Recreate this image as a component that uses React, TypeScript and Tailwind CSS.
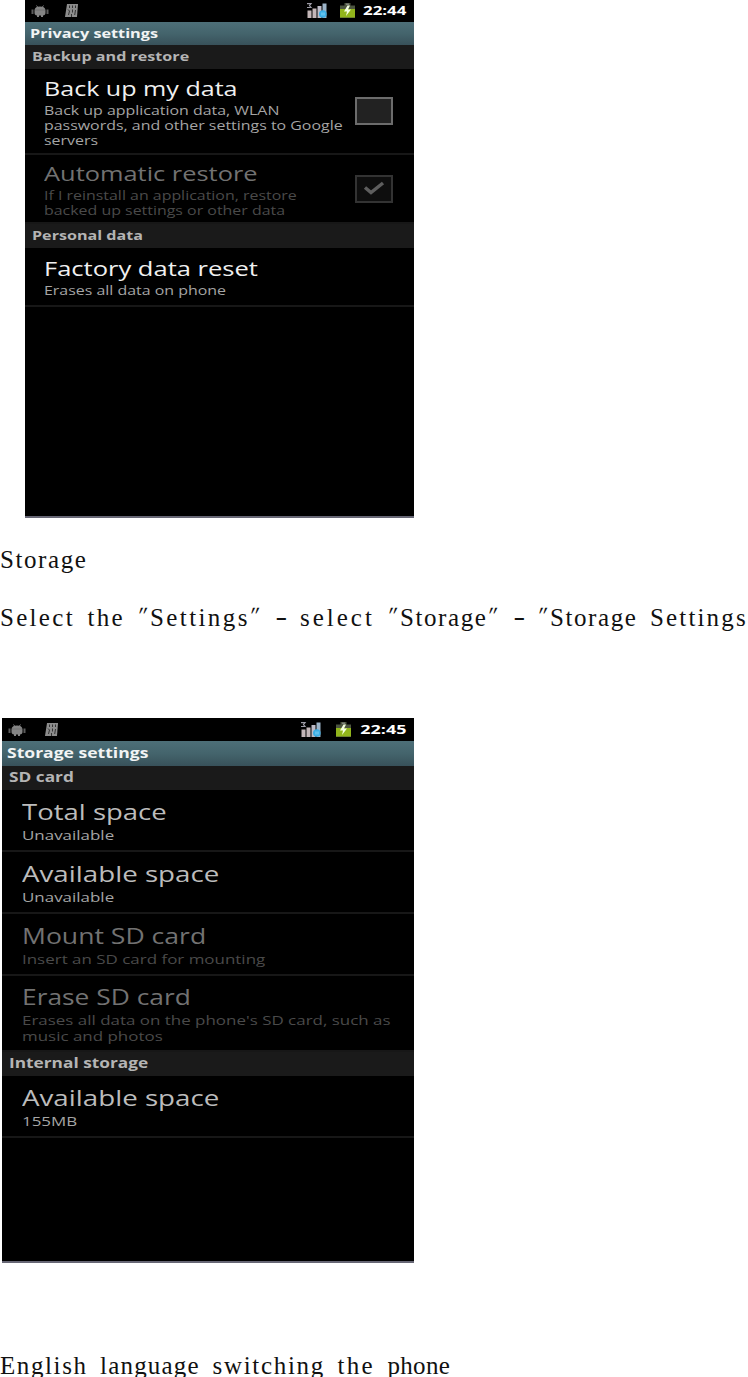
import { clsx } from 'clsx';
import type { ReactNode } from 'react';

type Item = {
  title: string;
  stretch: string;
  summary: string[];
  height: string;
  disabled?: boolean;
  checkbox?: 'on' | 'off';
};

function DebugIcon() {
  return (
    <svg className="h-3 w-[18px]" viewBox="0 0 18 12" fill="none">
      <path d="M5.500.5l1.500 2M12.500.5l-1.500 2" stroke="#777" />
      <path d="M3.500 5C3.800 2.500 6 1.500 9 1.500s5.200 1 5.500 3.500v3c0 1.500-1 2.500-2.500 2.500V12h-2v-1.500H8V12H6v-1.500C4.500 10.500 3.500 9.500 3.500 8z" fill="#858585" />
      <path d="M1.500 4.500v4.500M16.500 4.500v4.500" stroke="#5c5c5c" strokeWidth="2" />
      <path d="M4 5h10" stroke="#666" strokeWidth=".6" />
    </svg>
  );
}

function CardIcon() {
  return (
    <svg className="h-[13px] w-[13px]" viewBox="0 0 13 13" fill="none">
      <path d="M2 0h11l-1 13H0z" fill="#8c8c8c" />
      <path d="M4.500 1.500v2.500M7.500 1.500v2.500M10.500 1.500v2.500M3 5.500l1.500 1.500-1 4M7.500 5.500v3M10.500 6l-.8 5M6.500 10v3" stroke="#333" />
    </svg>
  );
}

function SignalIcon() {
  return (
    <svg className="h-[15px] w-5" viewBox="0 0 20 15" fill="none">
      <path d="M0 .7h4L2.500 2.500 4 4.500H0" stroke="#9d9ba5" strokeWidth="1.200" />
      <path d="M.5 7.500h4V15h-4zM5.500 5.500h4V15h-4z" fill="#c3b6b8" />
      <path d="M10.500 3h4v12h-4z" fill="#bdbbc6" />
      <path d="M15.500.5h4V15h-4z" fill="#9db4c8" />
      <circle cx="15.800" cy="11" r="3.800" fill="#3baee5" />
      <path d="M15 9.500v3M17 9.500v3" stroke="#9bddfa" strokeWidth=".8" />
    </svg>
  );
}

function BatteryIcon() {
  return (
    <svg className="h-[15px] w-[15px]" viewBox="0 0 15 15" fill="none">
      <path d="M4.500 0h6v2.500H15V15H0V2.500h4.500z" fill="#4c5540" />
      <path d="M0 6h15v8.500H0z" fill="#91b51b" />
      <path d="M6 1.200h3" stroke="#999" />
      <path d="M7.500 2.500L4 8.500h3L6 13l5-6.500H8l2-4z" fill="#f4ffe0" />
    </svg>
  );
}

function StatusBar({ time, large }: { time: string; large?: boolean }) {
  return (
    <div
      className={clsx(
        'flex shrink-0 items-center bg-black pl-[6px] pr-2 text-white',
        large ? 'h-[23px]' : 'h-[22px] pb-px',
      )}
    >
      <DebugIcon />
      <span className={large ? 'ml-[19px]' : 'ml-[16px]'}>
        <CardIcon />
      </span>
      <span className="ml-auto">
        <SignalIcon />
      </span>
      <span className={large ? 'ml-[15px]' : 'ml-[13px]'}>
        <BatteryIcon />
      </span>
      <span className={clsx('flex justify-end', large ? 'w-[55px]' : 'w-[51px]')}>
        <span
          className={clsx(
            'origin-right text-[13px] font-bold leading-none',
            large ? 'scale-x-[1.38]' : 'scale-x-[1.3]',
          )}
        >
          {time}
        </span>
      </span>
    </div>
  );
}

function TitleBar({ children, large }: { children: ReactNode; large?: boolean }) {
  return (
    <div
      className={clsx(
        'flex shrink-0 items-center bg-linear-to-b from-[#4d6f78] via-[#44646c] to-[#38515a] pl-[5px]',
        large ? 'h-[25px]' : 'h-[23px]',
      )}
    >
      <span
        className={clsx(
          'origin-left whitespace-nowrap font-bold leading-none text-[#f2f4f4]',
          large ? 'scale-x-[1.31] text-[13.4px]' : 'scale-x-[1.28] text-[12.7px]',
        )}
      >
        {children}
      </span>
    </div>
  );
}

function Category({ children, large }: { children: ReactNode; large?: boolean }) {
  return (
    <div className={clsx('flex h-6 shrink-0 items-center bg-[#1a1a1a] pl-[7px]', !large && 'pb-px')}>
      <span
        className={clsx(
          'origin-left whitespace-nowrap font-bold leading-none text-[#b4b4b4]',
          large ? 'scale-x-[1.29] text-[13.4px]' : 'scale-x-[1.27] text-[12.7px]',
        )}
      >
        {children}
      </span>
    </div>
  );
}

function Checkbox({ checked }: { checked: boolean }) {
  return (
    <span
      className={clsx(
        'ml-auto mr-[21px] flex h-7 w-[38px] items-center justify-center border-2',
        checked ? 'border-[#333] bg-[#0e0e0e]' : 'border-[#6c6c6c] bg-[#222]',
      )}
    >
      {checked && (
        <svg className="h-4 w-6" viewBox="0 0 24 16" fill="none">
          <path d="M3 6.500l6 5L21 2" stroke="#5e5e5e" strokeWidth="3.500" />
        </svg>
      )}
    </span>
  );
}

function Row({ item, large }: { item: Item; large?: boolean }) {
  const titleColor = item.disabled ? 'text-[#727272]' : large ? 'text-[#bcbcbc]' : 'text-[#f0f0f0]';
  const summaryColor = item.disabled ? 'text-[#4a4a4a]' : 'text-[#a5a5a5]';

  return (
    <div
      className={clsx(
        'flex shrink-0 items-center border-b-2 border-[#171717]',
        large ? 'pl-5' : 'pl-[19px]',
        item.height,
      )}
    >
      <div className="flex w-[220px] flex-col items-start whitespace-nowrap pt-[2px]">
        <span
          className={clsx(
            'mb-[2px] origin-left',
            large ? 'text-[21px] leading-[25px]' : 'text-[20px] leading-6',
            item.stretch,
            titleColor,
          )}
        >
          {item.title}
        </span>
        {item.summary.map((line) => (
          <span
            key={line}
            className={clsx(
              'origin-left',
              large
                ? 'scale-x-[1.265] text-[13.4px] leading-4'
                : 'scale-x-[1.255] text-[12.7px] leading-[15px]',
              summaryColor,
            )}
          >
            {line}
          </span>
        ))}
      </div>
      {item.checkbox && <Checkbox checked={item.checkbox === 'on'} />}
    </div>
  );
}

const backupItems: Item[] = [
  {
    title: 'Back up my data',
    stretch: 'scale-x-[1.254]',
    summary: ['Back up application data, WLAN', 'passwords, and other settings to Google', 'servers'],
    height: 'h-[86px]',
    checkbox: 'off',
  },
  {
    title: 'Automatic restore',
    stretch: 'scale-x-[1.27]',
    summary: ['If I reinstall an application, restore', 'backed up settings or other data'],
    height: 'h-[69px]',
    disabled: true,
    checkbox: 'on',
  },
];

const personalItems: Item[] = [
  {
    title: 'Factory data reset',
    stretch: 'scale-x-[1.276]',
    summary: ['Erases all data on phone'],
    height: 'h-[59px]',
  },
];

const sdItems: Item[] = [
  { title: 'Total space', stretch: 'scale-x-[1.31]', summary: ['Unavailable'], height: 'h-[62px]' },
  { title: 'Available space', stretch: 'scale-x-[1.32]', summary: ['Unavailable'], height: 'h-[62px]' },
  {
    title: 'Mount SD card',
    stretch: 'scale-x-[1.265]',
    summary: ['Insert an SD card for mounting'],
    height: 'h-[62px]',
    disabled: true,
  },
  {
    title: 'Erase SD card',
    stretch: 'scale-x-[1.255]',
    summary: ["Erases all data on the phone's SD card, such as", 'music and photos'],
    height: 'h-[76px]',
    disabled: true,
  },
];

const internalItems: Item[] = [
  { title: 'Available space', stretch: 'scale-x-[1.32]', summary: ['155MB'], height: 'h-[62px]' },
];

// Each word is tracked so that its letters fill a 12.5px pitch.
function Word({ width, tracking, children }: { width: string; tracking: string; children: ReactNode }) {
  return <span className={clsx('inline-block shrink-0', width, tracking)}>{children}</span>;
}

function Quote() {
  return (
    <span className="inline-block w-[12.5px] shrink-0 origin-[50%_30%] -translate-x-px -translate-y-[2px] -skew-x-[24deg] scale-x-[0.9] text-center">
      "
    </span>
  );
}

function Dash() {
  return (
    <span className="inline-block w-[12.5px] shrink-0 -translate-y-px scale-x-[1.4] text-center">-</span>
  );
}

function Line({ children }: { children: ReactNode }) {
  return (
    <p className="flex items-start gap-[12.5px] whitespace-nowrap font-['Liberation_Serif',serif] text-[25px] leading-[27px] text-[#111]">
      {children}
    </p>
  );
}

export default function App() {
  return (
    <div className="flex h-[1377px] w-[748px] flex-col overflow-hidden bg-white font-['Open_Sans','Noto_Sans',sans-serif]">
      <section className="ml-[25px] flex h-[518px] w-[389px] shrink-0 flex-col overflow-hidden border-b-2 border-[#676775] bg-black">
        <StatusBar time="22:44" />
        <TitleBar>Privacy settings</TitleBar>
        <Category>Backup and restore</Category>
        {backupItems.map((item) => (
          <Row key={item.title} item={item} />
        ))}
        <Category>Personal data</Category>
        {personalItems.map((item) => (
          <Row key={item.title} item={item} />
        ))}
      </section>

      <div className="mt-[28px] flex h-[172px] shrink-0 flex-col gap-[31px]">
        <Line>
          <Word width="w-[87.5px]" tracking="tracking-[1.58px]">Storage</Word>
        </Line>
        <Line>
          <Word width="w-[75px]" tracking="tracking-[2.3px]">Select</Word>
          <Word width="w-[37.5px]" tracking="tracking-[2.3px]">the</Word>
          <span className="flex">
            <Quote />
            <Word width="w-[100px]" tracking="tracking-[2.4px]">Settings</Word>
            <Quote />
          </span>
          <Dash />
          <Word width="w-[75px]" tracking="tracking-[3px]">select</Word>
          <span className="flex">
            <Quote />
            <Word width="w-[87.5px]" tracking="tracking-[1.58px]">Storage</Word>
            <Quote />
          </span>
          <Dash />
          <span className="flex">
            <Quote />
            <Word width="w-[87.5px]" tracking="tracking-[1.58px]">Storage</Word>
          </span>
          <Word width="w-[98px]" tracking="tracking-[2.15px]">Settings</Word>
        </Line>
      </div>

      <section className="ml-[2px] flex h-[545px] w-[412px] shrink-0 flex-col overflow-hidden border-b-2 border-[#676775] bg-black">
        <StatusBar time="22:45" large />
        <TitleBar large>Storage settings</TitleBar>
        <Category large>SD card</Category>
        {sdItems.map((item) => (
          <Row key={item.title} item={item} large />
        ))}
        <Category large>Internal storage</Category>
        {internalItems.map((item) => (
          <Row key={item.title} item={item} large />
        ))}
      </section>

      <div className="mt-[89px] shrink-0">
        <Line>
          <Word width="w-[87.5px]" tracking="tracking-[1.6px]">English</Word>
          <Word width="w-[100px]" tracking="tracking-[1.2px]">language</Word>
          <Word width="w-[112.5px]" tracking="tracking-[1.7px]">switching</Word>
          <Word width="w-[37.5px]" tracking="tracking-[2.3px]">the</Word>
          <Word width="w-[62.5px]" tracking="tracking-[0.3px]">phone</Word>
        </Line>
      </div>
    </div>
  );
}
